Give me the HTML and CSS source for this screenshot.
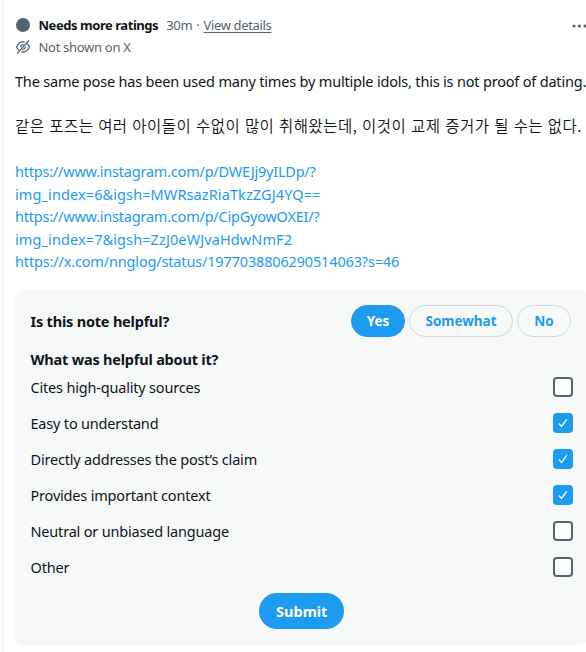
FILE: index.html
```html
<!DOCTYPE html>
<html lang="en">
<head>
  <meta charset="UTF-8" />
  <title>Community Note</title>
  <meta name="viewport" content="width=device-width, initial-scale=1.0" />
  <link rel="stylesheet" href="styles.css">
</head>

<body>

  <main class="note">
    <header class="note-header">
      <div class="status">
        <span class="status-dot"></span>
        <span class="status-title">Needs more ratings</span>
        <span class="status-time">30m</span>
        <span class="status-sep">·</span>
        <a class="status-link" href="#">View details</a>
        <button class="more" aria-label="More">
          <svg viewBox="0 0 18 4" aria-hidden="true">
            <circle cx="4" cy="2" r="1.6"/>
            <circle cx="9.5" cy="2" r="1.6"/>
            <circle cx="15" cy="2" r="1.6"/>
          </svg>
        </button>
      </div>
      <div class="visibility">
        <!-- crossed-out eye -->
        <svg class="eye-off" viewBox="0 0 16 16" aria-hidden="true">
          <path d="M9.8 3.2C6.2 2.3 3.3 4.2 1.5 8c.7 1.5 1.6 2.7 2.7 3.5M6.3 12.8c3.5.8 6.4-1.1 8.2-4.8-.7-1.5-1.6-2.7-2.7-3.5"/>
          <path d="M13.8 1.4 2.2 14.6M8.7 5.7C6.9 5.3 5.5 6.6 5.8 8.4M7.3 10.3c1.8.4 3.2-.9 2.9-2.7"/>
        </svg>
        <span class="visibility-text">Not shown on X</span>
      </div>
    </header>

    <section class="note-body">
      <p class="text-en">The same pose has been used many times by multiple idols, this is not proof of dating.</p>
      <p class="text-ko" lang="ko">같은 포즈는 여러 아이돌이 수없이 많이 취해왔는데, 이것이 교제 증거가 될 수는 없다.</p>
      <p class="links">
        <a href="#">https://www.instagram.com/p/DWEJj9yILDp/?<br><span class="query">img_index=6&amp;igsh=MWRsazRiaTkzZGJ4YQ==</span></a><br>
        <a href="#">https://www.instagram.com/p/CipGyowOXEI/?<br><span class="query">img_index=7&amp;igsh=ZzJ0eWJvaHdwNmF2</span></a><br>
        <a class="link-post" href="#">https://x.com/nnglog/status/1977038806290514063?s=46</a>
      </p>
    </section>

    <form class="rating">
      <div class="question">
        <h2 class="heading">Is this note helpful?</h2>
        <div class="answers">
          <button type="button" class="pill pill-yes selected">Yes</button>
          <button type="button" class="pill pill-somewhat">Somewhat</button>
          <button type="button" class="pill pill-no">No</button>
        </div>
      </div>

      <h2 class="heading reasons-title">What was helpful about it?</h2>
      <div class="reasons">
        <label class="reason"><span>Cites high-quality sources</span><input type="checkbox"></label>
        <label class="reason"><span>Easy to understand</span><input type="checkbox" checked></label>
        <label class="reason"><span>Directly addresses the post’s claim</span><input type="checkbox" checked></label>
        <label class="reason"><span>Provides important context</span><input type="checkbox" checked></label>
        <label class="reason"><span>Neutral or unbiased language</span><input type="checkbox"></label>
        <label class="reason"><span>Other</span><input type="checkbox"></label>
      </div>

      <button type="button" class="submit">Submit</button>
    </form>
  </main>

</body>
</html>
```
FILE: styles.css
```css
* {
  box-sizing: border-box;
  margin: 0;
  padding: 0;
}

body {
  background: #fff;
  color: #0f1419;
  font-family: "Segoe UI", "Noto Sans", "Noto Sans CJK KR", sans-serif;
  font-size: 14.5px;
  line-height: 22.5px;
  letter-spacing: -0.19px;
  overflow: hidden;
}

button {
  font-family: inherit;
  border: none;
  background: none;
  cursor: pointer;
}

.note {
  width: 601px;
  height: 652px;
  margin-left: 2px;
  padding: 14px 15px 0 12px;
  border-left: 1px solid #eff3f4;
}

.note-header {
  color: #536471;
  font-size: 13px;
  line-height: 22px;
  letter-spacing: -0.3px;
}

.status,
.visibility {
  display: flex;
  align-items: center;
  height: 22px;
}

.status-dot {
  width: 14px;
  height: 14px;
  margin: 0 8.5px 0 1px;
  border-radius: 50%;
  background: #536471;
}

.status-title {
  color: #0f1419;
  font-weight: 700;
  letter-spacing: -0.45px;
}

.status-time {
  margin-left: 8px;
}

.status-sep {
  margin: 0 4px;
}

.status-link {
  color: inherit;
  text-underline-offset: 2px;
  letter-spacing: -0.35px;
}

.more {
  width: 18px;
  height: 4px;
  margin-left: auto;
  line-height: 0;
}

.more svg {
  width: 18px;
  height: 4px;
  fill: #536471;
}

.eye-off {
  width: 16px;
  height: 16px;
  margin-right: 7.5px;
  fill: none;
  stroke: #536471;
  stroke-width: 1.3;
}

.note-body {
  margin-top: 12px;
  white-space: nowrap;
}

.text-ko {
  margin: 21px 0 24px;
  font-family: "Malgun Gothic", "Noto Sans CJK KR", sans-serif;
  font-size: 15.5px;
  font-weight: 350;
  letter-spacing: 0.45px;
}

.links {
  letter-spacing: -0.22px;
}

.links a {
  color: #1d9bf0;
  text-decoration: none;
}

.links .query {
  letter-spacing: 0.1px;
}

.link-post {
  letter-spacing: -0.16px;
}

/* Rating form */
.rating {
  display: flex;
  flex-direction: column;
  width: 573px;
  height: 356px;
  margin-top: 16px;
  padding: 16px 15px 16px 15.5px;
  border-radius: 8px;
  background: #f7f9f9;
}

.question {
  display: flex;
  align-items: center;
  justify-content: space-between;
  height: 32px;
}

.heading {
  font-size: 14.5px;
  font-weight: 700;
  line-height: 20px;
  letter-spacing: -0.2px;
}

.answers {
  display: flex;
  gap: 4px;
  margin-right: 2px;
}

.pill {
  height: 32px;
  border: 1px solid #cfd9de;
  border-radius: 16px;
  color: #1d9bf0;
  font-size: 13.5px;
  font-weight: 700;
}

.pill-yes,
.pill-no {
  width: 54px;
}

.pill-somewhat {
  width: 104px;
}

.pill.selected {
  border-color: #1d9bf0;
  background: #1d9bf0;
  color: #fff;
}

.reasons-title {
  margin-top: 12px;
}

.reasons {
  display: flex;
  flex-direction: column;
  gap: 16px;
  margin-top: 8px;
}

.reason {
  display: flex;
  align-items: center;
  justify-content: space-between;
  height: 20px;
}

.reason span {
  padding-top: 1px;
}

.reason input {
  appearance: none;
  width: 20px;
  height: 20px;
  border: 2px solid #536471;
  border-radius: 4px;
  background: #fff;
}

.reason input:checked {
  border-color: #1d9bf0;
  background: #1d9bf0 url("data:image/svg+xml,%3Csvg xmlns='http://www.w3.org/2000/svg' viewBox='0 0 16 16'%3E%3Cpath d='M3.3 8.6l3 3.3L12.4 3.5' fill='none' stroke='white' stroke-width='1.4'/%3E%3C/svg%3E") center / 14px no-repeat;
}

.submit {
  align-self: center;
  width: 85px;
  height: 36px;
  margin-top: 16px;
  border-radius: 18px;
  background: #1d9bf0;
  color: #fff;
  font-size: 14.5px;
  font-weight: 700;
}
```
